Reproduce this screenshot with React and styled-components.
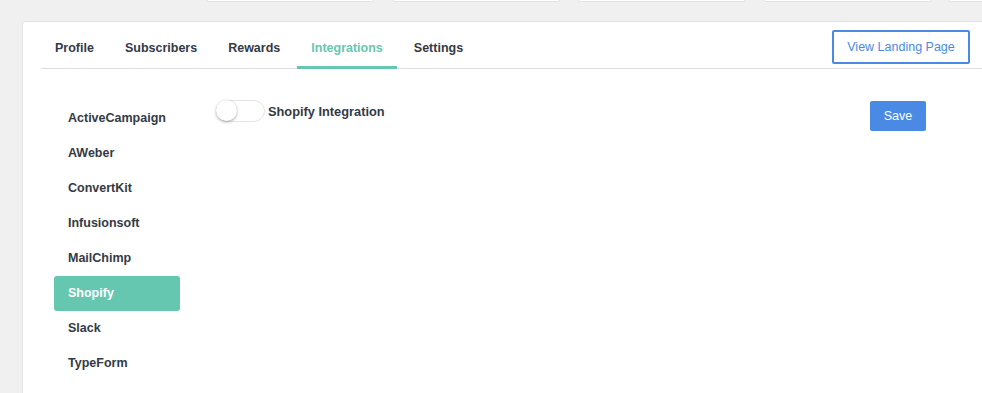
import React from "react";
import styled, {createGlobalStyle, css} from "styled-components";

const GlobalStyle = createGlobalStyle`
    html, body {
        margin: 0;
        padding: 0;
        background: #f0f0f0;
        font-family: "Liberation Sans", Arial, sans-serif;
        overflow: hidden;
    }
`;

const green = "#66c7b0";
const blue = "#4a8ae4";
const textDark = "#343a45";
const fontSize = "12.5px";

const Page = styled.div`
    width: 982px;
    height: 393px;
    overflow: hidden;
`;

const StatRow = styled.div`
    display: flex;
    gap: 18.5px;
    padding-left: 207px;
    height: 3px;
`;

const StatCard = styled.div`
    flex: 0 0 167px;
    box-sizing: border-box;
    height: 2px;
    background: #fff;
    border: 1px solid #e2e2e2;
    border-top: none;
    border-radius: 0 0 3px 3px;
`;

const Card = styled.div`
    margin: 18px 0 0 22px;
    width: 980px;
    height: 400px;
    background: #fff;
    border: 1px solid #e3e3e3;
    border-radius: 3px;
    padding: 0 0 0 18px;
    box-sizing: border-box;
`;

const TabBar = styled.div`
    display: flex;
    align-items: stretch;
    height: 46px;
    border-bottom: 1px solid #dedede;
`;

const Tab = styled.div`
    display: flex;
    align-items: center;
    padding: 8px 14px 0;
    margin-right: 3px;
    font-size: ${fontSize};
    font-weight: bold;
    color: ${textDark};
    border-bottom: 3px solid transparent;
    margin-bottom: -1px;

    ${props => props.active && css`
        color: ${green};
        border-bottom-color: ${green};
    `};
`;

const Spacer = styled.div`
    flex: 1;
`;

const OutlineButton = styled.button`
    align-self: flex-start;
    margin: 8px 31px 0 0;
    width: 138px;
    height: 34px;
    background: #fff;
    border: 2px solid ${blue};
    border-radius: 2px;
    color: ${blue};
    font-family: inherit;
    font-size: ${fontSize};
`;

const Body = styled.div`
    display: flex;
    align-items: flex-start;
    padding: 32px 0 0 13px;
`;

const SideNav = styled.div`
    display: flex;
    flex-direction: column;
    width: 126px;
`;

const NavItem = styled.div`
    height: 35px;
    box-sizing: border-box;
    display: flex;
    align-items: center;
    padding: 0 0 2px 14px;
    font-size: ${fontSize};
    font-weight: bold;
    color: ${textDark};
    border-radius: 3px;

    ${props => props.active && css`
        background: ${green};
        color: #fff;
    `};
`;

const Content = styled.div`
    flex: 1;
    display: flex;
    align-items: flex-start;
    padding-left: 36px;
    margin-top: -1px;
`;

const ToggleRow = styled.div`
    display: flex;
    align-items: center;
    gap: 3px;
`;

const Toggle = styled.div`
    position: relative;
    width: 47px;
    height: 20px;
    border: 1px solid #e4e4e4;
    border-radius: 11px;
    background: #fff;
`;

const Knob = styled.div`
    position: absolute;
    left: -1px;
    top: -1px;
    width: 21px;
    height: 21px;
    border-radius: 50%;
    background: #fff;
    box-shadow: 0 1px 3px rgba(0, 0, 0, 0.35);
`;

const ToggleLabel = styled.span`
    font-size: 12.8px;
    font-weight: bold;
    color: ${textDark};
`;

const SaveButton = styled.button`
    margin: 1px 75px 0 auto;
    width: 56px;
    height: 30px;
    background: ${blue};
    border: none;
    border-radius: 2px;
    color: #fff;
    font-family: inherit;
    font-size: ${fontSize};
`;

const tabs = ["Profile", "Subscribers", "Rewards", "Integrations", "Settings"];
const integrations = ["ActiveCampaign", "AWeber", "ConvertKit", "Infusionsoft", "MailChimp", "Shopify", "Slack", "TypeForm"];

const App = () => {
    return (
        <Page>
            <GlobalStyle/>
            <StatRow>
                {[0, 1, 2, 3, 4].map(i => <StatCard key={i}/>)}
            </StatRow>
            <Card>
                <TabBar>
                    {tabs.map(t => <Tab key={t} active={t === "Integrations"}>{t}</Tab>)}
                    <Spacer/>
                    <OutlineButton>View Landing Page</OutlineButton>
                </TabBar>
                <Body>
                    <SideNav>
                        {integrations.map(name =>
                            <NavItem key={name} active={name === "Shopify"}>{name}</NavItem>
                        )}
                    </SideNav>
                    <Content>
                        <ToggleRow>
                            <Toggle><Knob/></Toggle>
                            <ToggleLabel>Shopify Integration</ToggleLabel>
                        </ToggleRow>
                        <SaveButton>Save</SaveButton>
                    </Content>
                </Body>
            </Card>
        </Page>
    );
};

export default App;
